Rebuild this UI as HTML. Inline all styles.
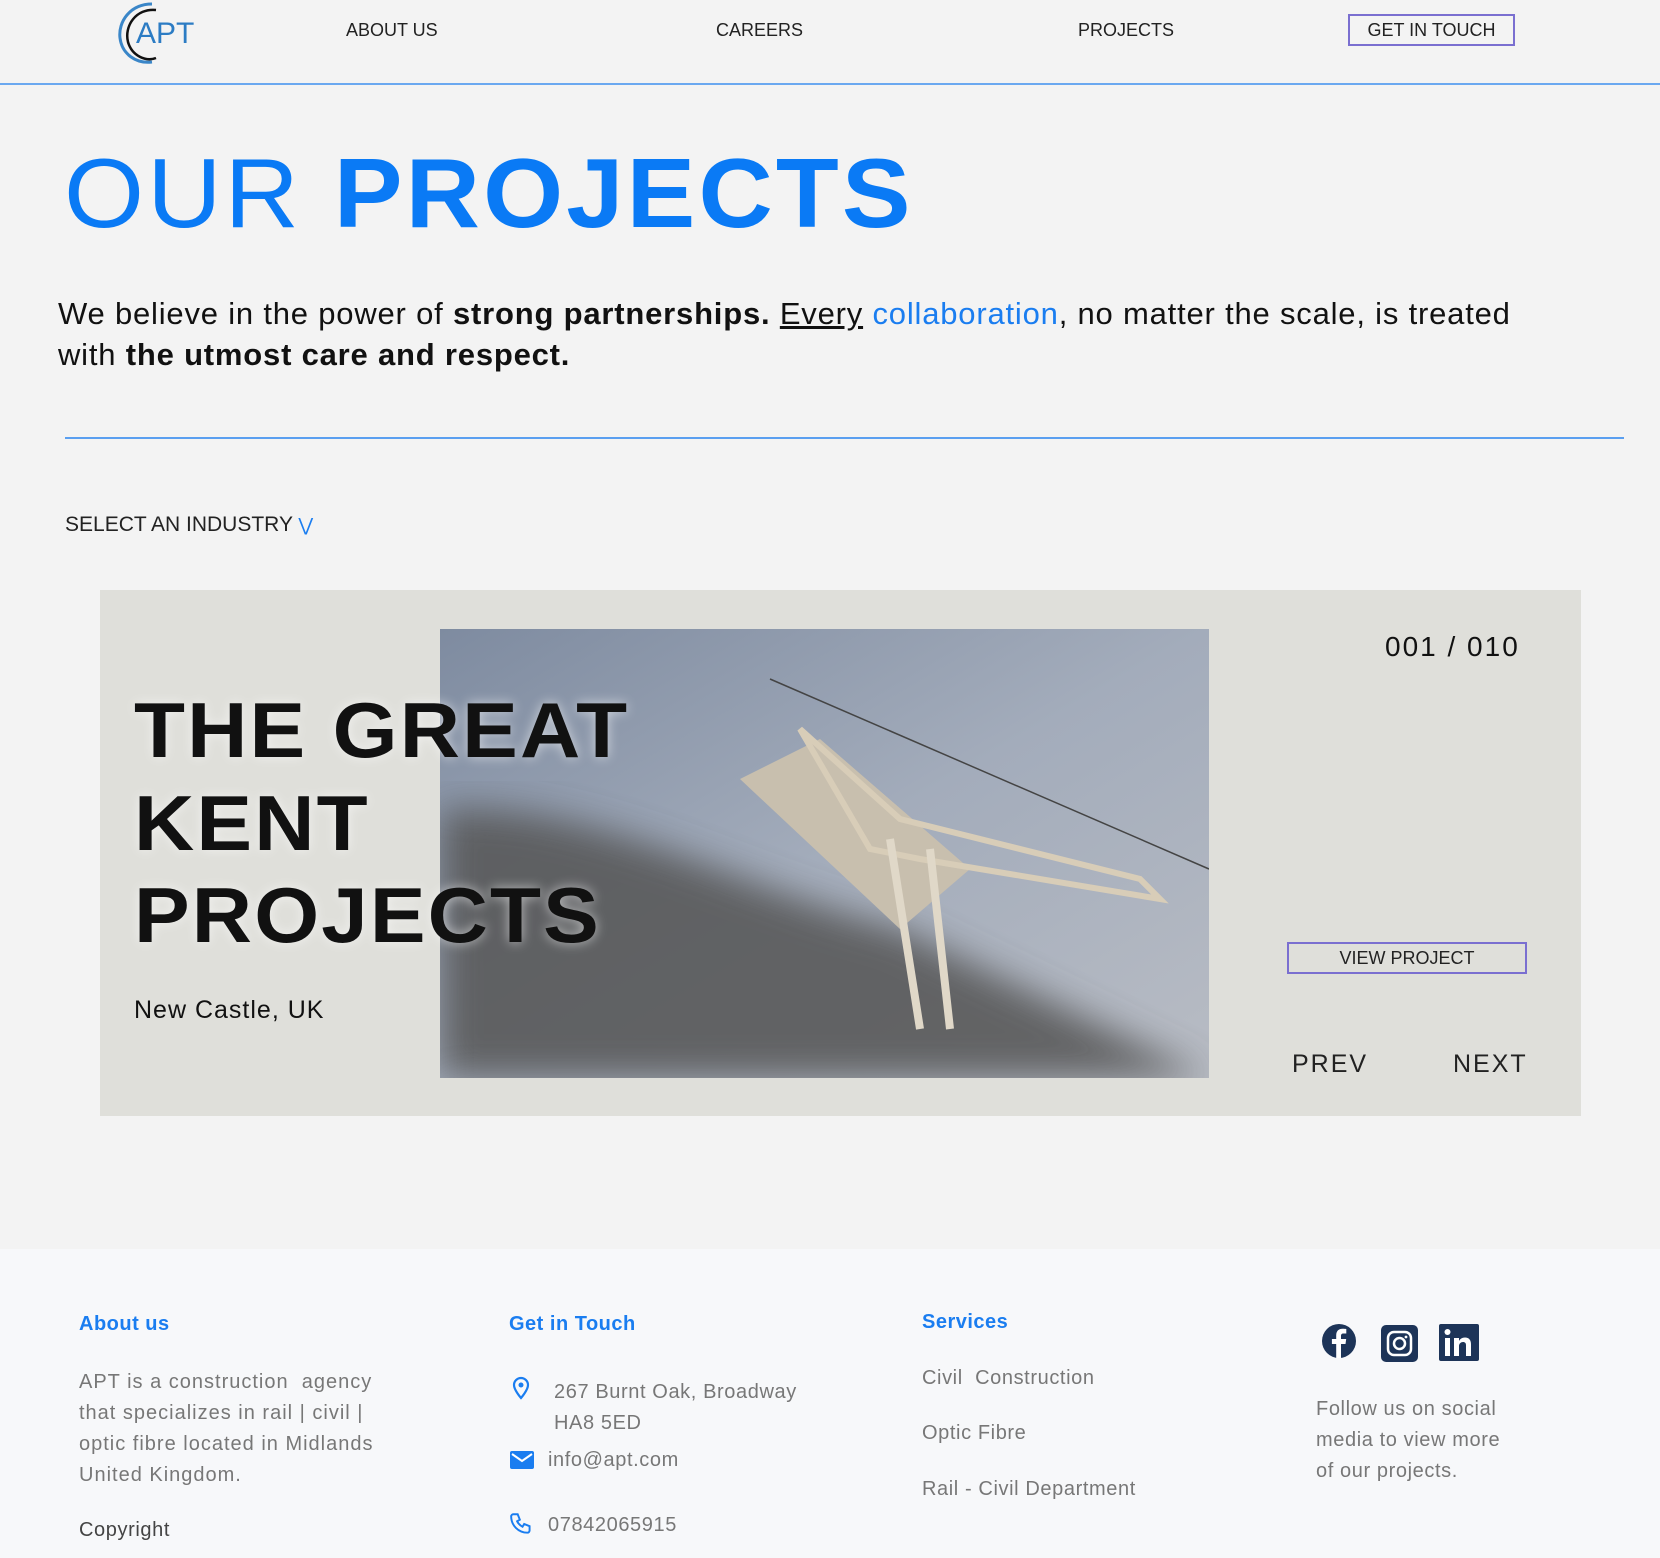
<!DOCTYPE html>
<html><head><meta charset="utf-8"><style>
*{margin:0;padding:0;box-sizing:border-box}
body{width:1660px;height:1558px;background:#f3f3f3;font-family:"Liberation Sans",sans-serif;position:relative;overflow:hidden;color:#111}
.a{position:absolute;white-space:nowrap}
.nav{font-size:18px;color:#222;top:20px}
.foot{position:absolute;left:0;top:1249px;width:1660px;height:309px;background:#f7f8fa}
.fh{color:#1a7df0;font-weight:bold;font-size:20px;letter-spacing:.5px}
.ft{color:#777;font-size:20px;letter-spacing:.6px}
.big{font-family:"Liberation Sans",sans-serif;font-weight:900;font-size:78px;color:#111;letter-spacing:2px;transform:scaleX(1.07);transform-origin:left;text-shadow:0 0 12px rgba(255,255,255,.6)}
</style></head><body>
<svg class="a" style="left:112px;top:0" width="95" height="66" viewBox="0 0 95 66">
<path d="M40 4 C18 4 6 22 8 38 C10 54 24 64 40 62" fill="none" stroke="#3a86c8" stroke-width="3"/>
<path d="M44 10 C24 8 12 26 16 42 C20 56 34 62 44 58" fill="none" stroke="#111" stroke-width="2.5"/>
<text x="24" y="43" font-family="Liberation Sans" font-size="30" fill="#2c7cc4">APT</text>
</svg>
<div class="a nav" style="left:346px">ABOUT US</div>
<div class="a nav" style="left:716px">CAREERS</div>
<div class="a nav" style="left:1078px">PROJECTS</div>
<div class="a nav" style="left:1348px;top:14px;width:167px;height:32px;border:2px solid #7a6fd0;text-align:center;line-height:28px">GET IN TOUCH</div>
<div class="a" style="left:0;top:83px;width:1660px;height:2px;background:#6aa8f0"></div>
<div class="a" style="left:64px;top:138px;font-size:98px;color:#0a7af5;letter-spacing:3px;transform:scaleX(1.05);transform-origin:left;line-height:110px"><span style="font-weight:normal">OUR</span> <b>PROJECTS</b></div>
<div class="a" style="left:58px;top:293px;font-size:31px;line-height:41px;white-space:normal;width:1500px;letter-spacing:.8px;color:#111">We believe in the power of <b>strong partnerships.</b> <u>Every</u> <span style="color:#1a7df0">collaboration</span>, no matter the scale, is treated with <b>the utmost care and respect.</b></div>
<div class="a" style="left:65px;top:437px;width:1559px;height:2px;background:#5a9ff0"></div>
<div class="a" style="left:65px;top:513px;font-size:21px;color:#222">SELECT AN INDUSTRY <span style="color:#1a7df0;font-size:18px">&#8897;</span></div>
<div class="a" style="left:100px;top:590px;width:1481px;height:526px;background:#dfdfda"></div>
<svg class="a" style="left:440px;top:629px" width="769" height="449" viewBox="0 0 769 449">
<defs><linearGradient id="g" x1="0" y1="0" x2="1" y2="1"><stop offset="0" stop-color="#7e8ba0"/><stop offset=".5" stop-color="#a3acbb"/><stop offset="1" stop-color="#b8bcc4"/></linearGradient>
<filter id="b"><feGaussianBlur stdDeviation="18"/></filter></defs>
<rect width="769" height="449" fill="url(#g)"/>
<path d="M0 180 C150 170 300 260 460 300 L769 449 L0 449Z" fill="#555" filter="url(#b)" opacity=".85"/>
<path d="M300 150 L380 110 L530 240 L460 300Z" fill="#c8bfae"/>
<path d="M360 100 L460 190 L700 250 L720 270 L480 230 L430 220Z" fill="none" stroke="#d8cdb8" stroke-width="6"/>
<path d="M450 210 L480 400 M490 220 L510 400" stroke="#e0d8c8" stroke-width="8"/>
<path d="M330 50 L769 240" stroke="#444" stroke-width="1.5"/>
</svg>
<div class="a big" style="left:134px;top:685px">THE GREAT</div>
<div class="a big" style="left:134px;top:778px">KENT</div>
<div class="a big" style="left:134px;top:870px">PROJECTS</div>
<div class="a" style="left:134px;top:996px;font-size:25px;letter-spacing:1px">New Castle, UK</div>
<div class="a" style="left:1385px;top:631px;font-size:28px;letter-spacing:2px">001 / 010</div>
<div class="a" style="left:1287px;top:942px;width:240px;height:32px;border:2px solid #7a6fd0;text-align:center;line-height:28px;font-size:18px;color:#222">VIEW PROJECT</div>
<div class="a" style="left:1292px;top:1050px;font-size:25px;letter-spacing:2px;color:#222">PREV</div>
<div class="a" style="left:1453px;top:1050px;font-size:25px;letter-spacing:2px;color:#222">NEXT</div>
<div class="foot"></div>
<div class="a fh" style="left:79px;top:1313px">About us</div>
<div class="a ft" style="left:79px;top:1367px;line-height:31px;white-space:normal;width:335px;letter-spacing:1px">APT is a construction &nbsp;agency that specializes in rail | civil | optic fibre located in Midlands United Kingdom.</div>
<div class="a" style="left:79px;top:1519px;font-size:20px;color:#444;letter-spacing:.6px">Copyright</div>
<div class="a fh" style="left:509px;top:1313px">Get in Touch</div>
<svg class="a" style="left:511px;top:1376px" width="20" height="24" viewBox="0 0 20 24"><path d="M10 2a7 7 0 0 0-7 7c0 5 7 13 7 13s7-8 7-13a7 7 0 0 0-7-7z" fill="none" stroke="#1a7df0" stroke-width="2.2"/><circle cx="10" cy="9" r="2.5" fill="#1a7df0"/></svg>
<div class="a ft" style="left:554px;top:1377px;line-height:31px">267 Burnt Oak, Broadway<br>HA8 5ED</div>
<svg class="a" style="left:510px;top:1451px" width="24" height="18" viewBox="0 0 24 18"><rect width="24" height="18" rx="2" fill="#1a7df0"/><path d="M2 3l10 7 10-7" fill="none" stroke="#fff" stroke-width="2"/></svg>
<div class="a ft" style="left:548px;top:1449px">info@apt.com</div>
<svg class="a" style="left:509px;top:1511px" width="26" height="26" viewBox="0 0 24 24"><path d="M4 3h4l2 5-2.5 1.5a11 11 0 0 0 5 5L14 12l5 2v4a2 2 0 0 1-2 2A15 15 0 0 1 2 5a2 2 0 0 1 2-2z" fill="none" stroke="#1a7df0" stroke-width="1.8"/></svg>
<div class="a ft" style="left:548px;top:1514px">07842065915</div>
<div class="a fh" style="left:922px;top:1311px">Services</div>
<div class="a ft" style="left:922px;top:1367px">Civil &nbsp;Construction</div>
<div class="a ft" style="left:922px;top:1422px">Optic Fibre</div>
<div class="a ft" style="left:922px;top:1478px">Rail - Civil Department</div>
<svg class="a" style="left:1321px;top:1323px" width="180" height="40" viewBox="0 0 180 40">
<circle cx="18" cy="18" r="17" fill="#1d3458"/><path d="M20 35V21h4.5l.7-5H20v-3c0-1.5.5-2.5 2.6-2.5h2.7V6c-.5-.1-2-.2-3.8-.2-3.8 0-6.3 2.3-6.3 6.5V16h-4.3v5h4.3v14z" fill="#fff"/>
<rect x="60" y="2" width="37" height="37" rx="5" fill="#1d3458"/><rect x="67" y="9" width="23" height="23" rx="6" fill="none" stroke="#fff" stroke-width="2.5"/><circle cx="78.5" cy="20.5" r="5.5" fill="none" stroke="#fff" stroke-width="2.5"/><circle cx="85" cy="14" r="1.4" fill="#fff"/>
<rect x="118" y="1" width="40" height="37" rx="2" fill="#1d3458"/><rect x="124" y="15" width="5" height="18" fill="#fff"/><circle cx="126.5" cy="9" r="3" fill="#fff"/><path d="M133 33V15h5v3c1-2 3-3.5 6-3.5 4 0 6 2.5 6 7V33h-5V22.5c0-2.5-1-3.5-3-3.5s-4 1.5-4 4V33z" fill="#fff"/>
</svg>
<div class="a ft" style="left:1316px;top:1394px;line-height:31px">Follow us on social<br>media to view more<br>of our projects.</div>
</body></html>
